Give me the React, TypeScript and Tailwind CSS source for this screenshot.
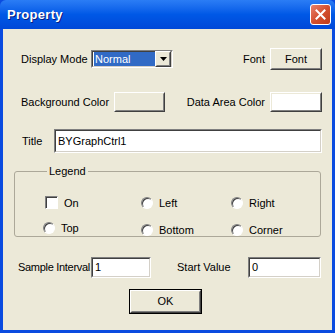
import React from 'react';

const font = { fontFamily: '"Liberation Sans", Arial, sans-serif' };

function Sunken({ className = '', children }: { className?: string; children?: React.ReactNode }) {
  return (
    <div className={`border border-t-[#7f7f7f] border-l-[#7f7f7f] border-b-white border-r-white ${className}`}>
      <div className="h-full w-full border border-t-[#404040] border-l-[#404040] border-b-[#d4d0c8] border-r-[#d4d0c8] bg-white">
        {children}
      </div>
    </div>
  );
}

function Raised({ className = '', children, fill = 'bg-[#ece9d8]' }: { className?: string; children?: React.ReactNode; fill?: string }) {
  return (
    <div className={`border border-t-white border-l-white border-b-[#404040] border-r-[#404040] ${className}`}>
      <div className={`flex h-full w-full items-center justify-center border border-t-[#ece9d8] border-l-[#ece9d8] border-b-[#808080] border-r-[#808080] ${fill}`}>
        {children}
      </div>
    </div>
  );
}

function Radio({ label }: { label: string }) {
  return (
    <div className="flex items-center gap-[6px]">
      <div className="h-[12px] w-[12px] rounded-full border border-t-[#808080] border-l-[#808080] border-b-white border-r-white bg-white shadow-[inset_1px_1px_0_#404040]" />
      <span>{label}</span>
    </div>
  );
}

export default function App() {
  return (
    <div className="flex h-[333px] w-[335px] flex-col whitespace-nowrap bg-[#0a4be0] text-[11px] text-black" style={font}>
      {/* title bar */}
      <div className="flex h-[29px] items-center justify-between rounded-t-[6px] bg-gradient-to-b from-[#2b7df5] via-[#0058e6] to-[#0048d8] pl-[7px] pr-[4px]">
        <span className="text-[13px] font-bold tracking-[0.3px] text-white [text-shadow:1px_1px_0_#0a1e80]">Property</span>
        <div className="flex h-[21px] w-[21px] items-center justify-center rounded-[3px] border border-white bg-gradient-to-br from-[#e8806a] via-[#d4502f] to-[#c03a18]">
          <svg width="11" height="11" viewBox="0 0 11 11">
            <path d="M1.5 1.5 L9.5 9.5 M9.5 1.5 L1.5 9.5" stroke="white" strokeWidth="2" strokeLinecap="square" />
          </svg>
        </div>
      </div>

      {/* client area */}
      <div className="mx-[3px] mb-[3px] flex flex-1 flex-col bg-[#ece9d8]">
        {/* row 1 */}
        <div className="mt-[19px] flex h-[22px] items-center pl-[18px] pr-[10px]">
          <span className="w-[70px] shrink-0">Display Mode</span>
          <Sunken className="h-[18px] w-[82px] shrink-0">
            <div className="flex h-full items-center">
              <span className="ml-[1px] flex h-[14px] flex-1 items-center bg-[#316ac5] pl-[1px] text-white">Normal</span>
              <Raised className="h-[16px] w-[16px]">
                <svg width="7" height="4" viewBox="0 0 7 4">
                  <path d="M0 0 H7 L3.5 4 Z" fill="black" />
                </svg>
              </Raised>
            </div>
          </Sunken>
          <span className="ml-auto mr-[5px]">Font</span>
          <Raised className="h-[22px] w-[52px] shrink-0">Font</Raised>
        </div>

        {/* row 2 */}
        <div className="mt-[22px] flex h-[20px] items-center pl-[18px] pr-[10px]">
          <span className="w-[93px] shrink-0">Background Color</span>
          <Raised className="h-[20px] w-[51px] shrink-0" />
          <span className="ml-auto mr-[5px]">Data Area Color</span>
          <Raised className="h-[20px] w-[52px] shrink-0" fill="bg-white" />
        </div>

        {/* row 3 */}
        <div className="mt-[17px] flex h-[24px] items-center pl-[19px] pr-[10px]">
          <span className="w-[32px] shrink-0">Title</span>
          <Sunken className="h-[24px] flex-1">
            <div className="flex h-full items-center pl-[2px]">BYGraphCtrl1</div>
          </Sunken>
        </div>

        {/* legend group */}
        <fieldset className="ml-[11px] mr-[11px] mt-[10px] h-[74px] rounded-[3px] border border-[#aca899] pl-[28px] pt-[15px]">
          <legend className="ml-[4px] px-[2px]">Legend</legend>
          <div className="grid grid-cols-[98px_90px_1fr] gap-y-[11px]">
            <div className="flex items-center gap-[6px] pl-[2px]">
              <div className="h-[13px] w-[13px] border border-t-[#808080] border-l-[#808080] border-b-white border-r-white bg-white shadow-[inset_1px_1px_0_#404040]" />
              <span>On</span>
            </div>
            <Radio label="Left" />
            <Radio label="Right" />
            <div className="-mt-[2px]">
              <Radio label="Top" />
            </div>
            <Radio label="Bottom" />
            <Radio label="Corner" />
          </div>
        </fieldset>

        {/* bottom row */}
        <div className="mt-[20px] flex h-[21px] items-center pl-[15px] pr-[11px]">
          <span className="w-[73px] shrink-0 tracking-[-0.3px]">Sample Interval</span>
          <Sunken className="h-[21px] w-[60px] shrink-0">
            <div className="flex h-full items-center pl-[2px]">1</div>
          </Sunken>
          <span className="ml-[26px] w-[71px] shrink-0">Start Value</span>
          <Sunken className="h-[21px] flex-1">
            <div className="flex h-full items-center pl-[2px]">0</div>
          </Sunken>
        </div>

        <div className="mt-[11px] flex justify-center">
          <div className="ml-[-4px] border border-black">
            <Raised className="h-[23px] w-[71px]">OK</Raised>
          </div>
        </div>
      </div>
    </div>
  );
}
